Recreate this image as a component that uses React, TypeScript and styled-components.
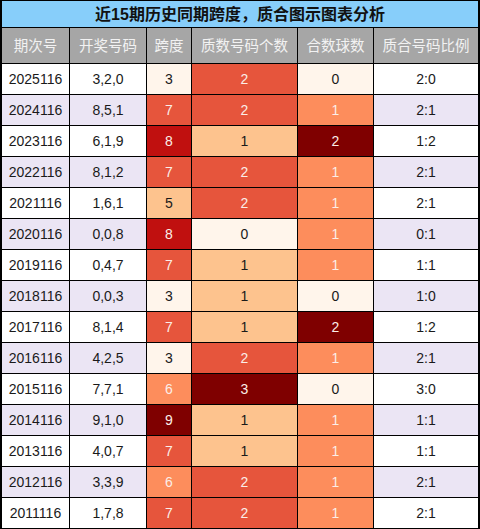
import styled, { createGlobalStyle } from "styled-components";

const GlobalStyle = createGlobalStyle`
  body {
    margin: 0;
    background: #fff;
    font-family: "Liberation Sans", "Noto Sans CJK SC", sans-serif;
  }
`;

type Row = [string, string, number, number, number, string];

const rows: Row[] = [
  ["2025116", "3,2,0", 3, 2, 0, "2:0"],
  ["2024116", "8,5,1", 7, 2, 1, "2:1"],
  ["2023116", "6,1,9", 8, 1, 2, "1:2"],
  ["2022116", "8,1,2", 7, 2, 1, "2:1"],
  ["2021116", "1,6,1", 5, 2, 1, "2:1"],
  ["2020116", "0,0,8", 8, 0, 1, "0:1"],
  ["2019116", "0,4,7", 7, 1, 1, "1:1"],
  ["2018116", "0,0,3", 3, 1, 0, "1:0"],
  ["2017116", "8,1,4", 7, 1, 2, "1:2"],
  ["2016116", "4,2,5", 3, 2, 1, "2:1"],
  ["2015116", "7,7,1", 6, 3, 0, "3:0"],
  ["2014116", "9,1,0", 9, 1, 1, "1:1"],
  ["2013116", "4,0,7", 7, 1, 1, "1:1"],
  ["2012116", "3,3,9", 6, 2, 1, "2:1"],
  ["2011116", "1,7,8", 7, 2, 1, "2:1"],
];

const CREAM = "#fff5eb";
const PEACH = "#fdc38e";
const ORANGE = "#fd8d5c";
const RED = "#e6553c";
const DARK = "#c0100f";
const MAROON = "#7f0000";

const spanColors: Record<number, string> = { 3: CREAM, 5: PEACH, 6: ORANGE, 7: RED, 8: DARK, 9: MAROON };
const primeColors: Record<number, string> = { 0: CREAM, 1: PEACH, 2: RED, 3: MAROON };
const compColors: Record<number, string> = { 0: CREAM, 1: ORANGE, 2: MAROON };

const isLight = (c: string) => c === CREAM || c === PEACH;

const headers = ["期次号", "开奖号码", "跨度", "质数号码个数", "合数球数", "质合号码比例"];

export default function App() {
  return (
    <>
      <GlobalStyle />
      <Sheet>
        <TitleBar>近15期历史同期跨度，质合图示图表分析</TitleBar>
        {headers.map((h, i) => (
          <HeadCell key={h} $last={i === 5}>
            {h}
          </HeadCell>
        ))}
        {rows.map((r, i) => {
          const stripe = i % 2 === 1;
          const heat = [spanColors[r[2]], primeColors[r[3]], compColors[r[4]]];
          return [
            <Cell key={r[0] + "a"} $stripe={stripe}>{r[0]}</Cell>,
            <Cell key={r[0] + "b"} $stripe={stripe}>{r[1]}</Cell>,
            ...[r[2], r[3], r[4]].map((v, j) => (
              <HeatCell key={r[0] + j} $bg={heat[j]} $light={isLight(heat[j])}>
                {v}
              </HeatCell>
            )),
            <Cell key={r[0] + "f"} $stripe={stripe} $last>
              {r[5]}
            </Cell>,
          ];
        })}
      </Sheet>
    </>
  );
}

const Sheet = styled.div`
  width: 480px;
  box-sizing: border-box;
  display: grid;
  grid-template-columns: 68px 77px 45px 106px 76px 104px;
  grid-template-rows: 27px 36px repeat(15, 31px);
  border-top: 1px solid #000;
  border-left: 2px solid #000;
  border-right: 2px solid #000;
`;

const Base = styled.div`
  box-sizing: border-box;
  display: flex;
  align-items: center;
  justify-content: center;
  border-bottom: 1px solid #000;
  line-height: 1;
  white-space: nowrap;
`;

const TitleBar = styled(Base)`
  grid-column: 1 / -1;
  background: #87cefa;
  color: #111;
  font-family: "Liberation Sans", "Noto Sans CJK SC", sans-serif;
  font-size: 16px;
  font-weight: 700;
  padding-top: 1px;
`;

const HeadCell = styled(Base)<{ $last?: boolean }>`
  background: #a6a6a6;
  color: #f2f2f2;
  font-family: "Noto Sans CJK SC", sans-serif;
  font-size: 14.5px;
  border-right: ${(p) => (p.$last ? "none" : "1px solid #000")};
`;

const Cell = styled(Base)<{ $stripe: boolean; $last?: boolean }>`
  background: ${(p) => (p.$stripe ? "#ebe5f4" : "#fff")};
  color: #1a1a1a;
  font-size: 14px;
  border-right: ${(p) => (p.$last ? "none" : "1px solid #000")};
`;

const HeatCell = styled(Base)<{ $bg: string; $light: boolean }>`
  background: ${(p) => p.$bg};
  color: ${(p) => (p.$light ? "#1a1a1a" : "#fbeee8")};
  font-size: 14px;
  border-right: 1px solid #000;
`;
